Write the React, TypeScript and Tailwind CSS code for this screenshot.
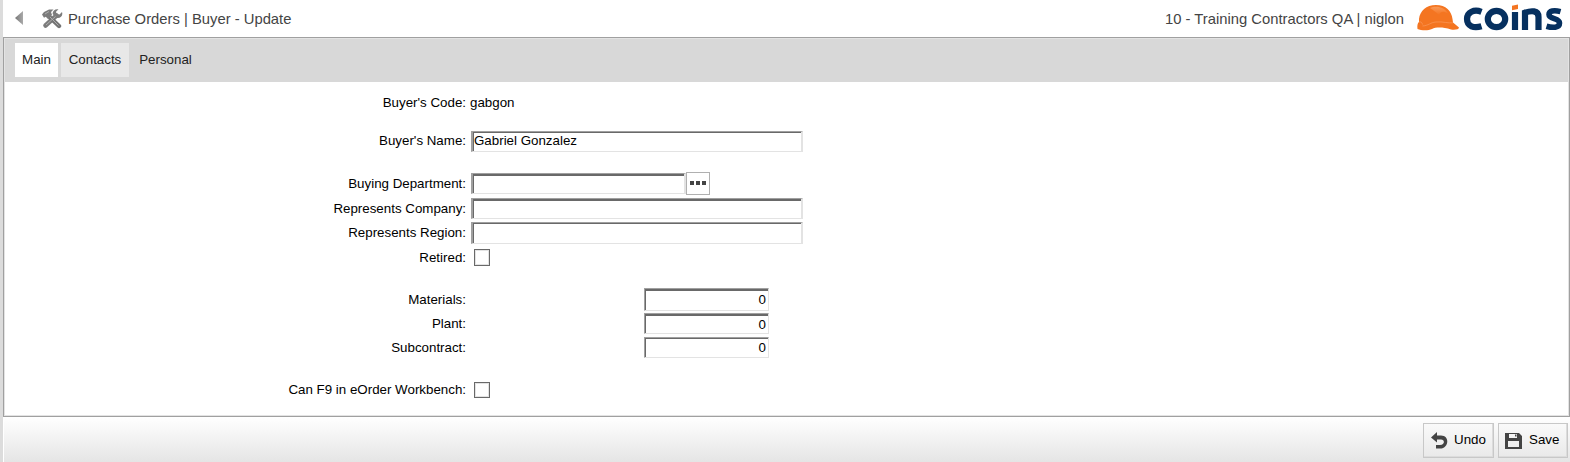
import React from 'react';

const inset =
  'shrink-0 bg-white border-t border-b border-t-[#a0a0a0] border-l-[#a0a0a0] border-r-[#e3e3e3] border-b-[#e3e3e3]';

function Field({ text = '', className, thick = false, right = false }: { text?: string; className: string; thick?: boolean; right?: boolean }) {
  return (
    <div className={`${inset} ${right ? 'border-x' : 'border-x-2'} ${className}`}>
      <div
        className={`h-full w-full border-l border-[#696969] ${thick ? 'border-t-2' : 'border-t'} ${right ? 'pr-[2px] text-right leading-[17px]' : 'leading-[15px]'}`}
      >
        {text}
      </div>
    </div>
  );
}

function Check({ className }: { className: string }) {
  return (
    <div className={`ml-[3px] w-4 shrink-0 border border-[#696969] bg-white ${className}`}>
      <div className="h-full w-full border border-[#e3e3e3]" />
    </div>
  );
}

function Row({ label, mt, children }: { label: string; mt: string; children?: React.ReactNode }) {
  return (
    <div className={`flex h-[22px] items-start ${mt}`}>
      <div className="w-[461px] shrink-0 text-right leading-[24px]">{label}</div>
      <div className="ml-[5px] flex items-start">{children}</div>
    </div>
  );
}

function Helmet() {
  return (
    <svg width="44" height="28" viewBox="0 0 44 28" className="shrink-0">
      <defs>
        <linearGradient id="shine" x1="0" y1="0" x2="0" y2="1">
          <stop offset="0" stopColor="#fa9a58" />
          <stop offset="1" stopColor="#f47521" />
        </linearGradient>
      </defs>
      <path d="M3 15C4 7 10 1 20 1C30 1 35.500 7 36.500 15L37 18.500L43 23.500C43 25.500 39 26 35 25.500C27 23 20 23 16 25C12 27 5 26.500 1.500 25C1 22 1.500 19 3 18Z" fill="#f47521" />
      <path d="M14 4C20 1 29 3 32 9.500C28 7 24.500 7 23 11C20 8 17 6 14 4Z" fill="url(#shine)" />
      <path d="M3 18C5 17.500 6 18.500 6.500 20.500M6.500 22C13 21.500 14 18.500 20 18C27 17.300 32 19.500 37 18.800" fill="none" stroke="#f99a5b" strokeWidth="0.7" />
    </svg>
  );
}

function Coins() {
  return (
    <svg width="101" height="28" viewBox="0 0 101 28" className="shrink-0">
      <g fill="none" stroke="#06305f" strokeWidth="6.200">
        <path d="M18.500 7.800C11 5 4 8 4 15C4 22.500 11 24.500 18.500 22.200" />
        <ellipse cx="33.500" cy="15" rx="8.700" ry="8.200" />
        <path d="M52 8V26M62 26V8.700C68 6.500 75.500 6 75.500 13V26" />
        <path d="M97.500 7.600C91 5.800 86 6.700 86 10.500C86 15.300 96.500 14 96.500 19C96.500 24 89.500 24 83.500 22.200" strokeWidth="5.600" />
      </g>
      <path d="M49 1.700L55 .5V5L49 6.200Z" fill="#f47521" />
    </svg>
  );
}

function Tools() {
  return (
    <svg width="21" height="20" viewBox="0 0 21 20" className="shrink-0">
      <path d="M3.500 16.500L14.500 6.500" stroke="#7c7c7c" strokeWidth="4.600" strokeLinecap="round" />
      <path d="M20 3L17.500 5.500L14.500 5L14 2.800L16.500 .3C13 -.5 10 2 10.800 5.200L14.800 9C18.500 9.700 21.300 6.500 20 3Z" fill="#7c7c7c" />
      <path d="M7 7.500L17 17" stroke="#747474" strokeWidth="4.400" strokeLinecap="round" />
      <path d="M0 5.500L2 3L7 .5H11.500L9 3L10 6L6 10L3.800 7.700L2 8.700Z" fill="#7c7c7c" />
      <path d="M4 16L13.500 7.500M3 5L7 2.500M8 8L16.500 16.500" stroke="#adadad" strokeWidth="1" />
    </svg>
  );
}

function Tab({ label, className }: { label: string; className: string }) {
  return <div className={`h-[34px] text-center leading-[33px] text-[#222] ${className}`}>{label}</div>;
}

const button =
  'flex h-[35px] items-center border border-[#c8c8c8] bg-linear-to-b from-[#fafafa] to-[#e9e9e9] shadow-[inset_-1px_-1px_0_#dcdcdc]';

export default function App() {
  return (
    <div className="flex h-[462px] w-[1570px] overflow-hidden bg-white font-['Liberation_Sans',Arial,sans-serif] text-[13.33px] text-black">
      <div className="w-[3px] shrink-0 bg-[#dcdcdc]" />
      <div className="flex min-w-0 flex-1 flex-col">
        <header className="flex h-[37px] shrink-0 items-start text-[14.8px] leading-[38px] text-[#444]">
          <svg width="8" height="14" viewBox="0 0 8 14" className="mt-[11px] ml-3 shrink-0">
            <defs>
              <linearGradient id="arrow" x1="0" y1="0" x2="1" y2="0">
                <stop offset="0" stopColor="#777" />
                <stop offset="1" stopColor="#aaa" />
              </linearGradient>
            </defs>
            <path d="M8 0V14L0 7Z" fill="url(#arrow)" />
          </svg>
          <div className="mt-[9px] ml-[19px]"><Tools /></div>
          <div className="ml-[5px] whitespace-nowrap">Purchase Orders | Buyer - Update</div>
          <div className="ml-auto whitespace-nowrap">10 - Training Contractors QA | niglon</div>
          <div className="mt-[4px] ml-[12px] flex w-[154px] items-start">
            <Helmet />
            <div className="ml-[3px]"><Coins /></div>
          </div>
        </header>
        <main className="flex h-[380px] shrink-0 flex-col border border-[#a0a0a0]">
          <div className="flex flex-1 flex-col border border-[#e3e3e3]">
            <nav className="flex h-[43px] shrink-0 bg-[#d8d8d8] pt-1 pl-[10px]">
              <Tab label="Main" className="w-[43px] bg-white" />
              <Tab label="Contacts" className="ml-[3px] w-[68px] bg-[#e8e8e8]" />
              <Tab label="Personal" className="ml-[3px] w-[67px]" />
            </nav>
            <Row label="Buyer's Code:" mt="mt-[9px]">
              <span className="-ml-px leading-[24px]">gabgon</span>
            </Row>
            <Row label="Buyer's Name:" mt="mt-4">
              <Field text="Gabriel Gonzalez" className="mt-[2px] h-[21px] w-[332px]" />
            </Row>
            <Row label="Buying Department:" mt="mt-[21px]">
              <Field className="mt-px h-[21px] w-[215px]" thick />
              <div className="flex h-[23px] w-6 items-start justify-center gap-[2px] border border-[#b0b0b0] bg-white pt-[8px]">
                <i className="size-[4px] bg-[#444]" />
                <i className="size-[4px] bg-[#444]" />
                <i className="size-[4px] bg-[#444]" />
              </div>
            </Row>
            <Row label="Represents Company:" mt="mt-[3px]">
              <Field className="mt-px h-[21px] w-[332px]" thick />
            </Row>
            <Row label="Represents Region:" mt="mt-[2px]">
              <Field className="mt-px h-[22px] w-[332px]" />
            </Row>
            <Row label="Retired:" mt="mt-[3px]">
              <Check className="mt-[3px] h-[17px]" />
            </Row>
            <Row label="Materials:" mt="mt-5">
              <Field text="0" className="ml-[173px] h-[23px] w-[125px]" thick right />
            </Row>
            <Row label="Plant:" mt="mt-[2px]">
              <Field text="0" className="mt-px ml-[173px] h-[21px] w-[125px]" thick right />
            </Row>
            <Row label="Subcontract:" mt="mt-[2px]">
              <Field text="0" className="mt-px ml-[173px] h-[21px] w-[125px]" right />
            </Row>
            <Row label="Can F9 in eOrder Workbench:" mt="mt-5">
              <Check className="mt-[4px] h-4" />
            </Row>
          </div>
        </main>
        <footer className="ml-px flex flex-1 items-start justify-end gap-1 bg-linear-to-b from-white to-[#e5e5e5] pt-[6px] pr-[2px]">
          <div className={`${button} w-[71px] pl-[7px]`}>
            <svg width="17" height="17" viewBox="0 0 17 17">
              <path d="M0 5.500L6 0V3.500H10C19 3.500 18 16.500 9 16.500H5V13H9C14 13 14 7.500 10 7.500H6V10.500Z" fill="#444" />
            </svg>
            <span className="-mt-[2px] ml-[6px]">Undo</span>
          </div>
          <div className={`${button} w-[70px] pl-[6px]`}>
            <svg width="17" height="17" viewBox="0 0 17 17">
              <path fillRule="evenodd" d="M0 1H14L17 4V17H0ZM4 2V6H12V2ZM3 9V15H14V9ZM10 2.500H11.500V4.500H10Z" fill="#444" />
            </svg>
            <span className="-mt-[2px] ml-[7px]">Save</span>
          </div>
        </footer>
      </div>
    </div>
  );
}
